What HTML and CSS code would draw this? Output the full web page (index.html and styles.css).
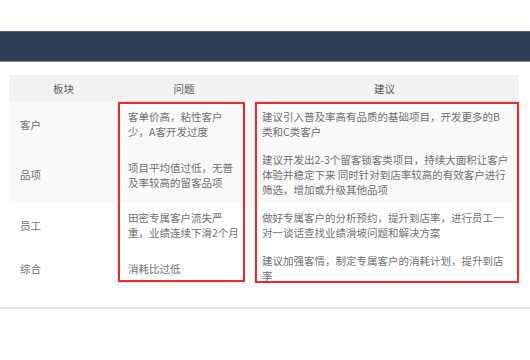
FILE: index.html
```html
<!DOCTYPE html>
<html lang="zh">
<head>
<meta charset="utf-8">
<link rel="stylesheet" href="styles.css">
</head>
<body>
<div class="topbar"></div>
<div class="content">
  <div class="table-wrap">
    <table class="report">
      <colgroup>
        <col class="c-block">
        <col class="c-issue">
        <col class="c-advice">
      </colgroup>
      <thead>
        <tr><th>板块</th><th>问题</th><th>建议</th></tr>
      </thead>
      <tbody>
        <tr class="shade">
          <td>客户</td>
          <td class="issue">客单价高，粘性客户<br>少，A客开发过度</td>
          <td class="advice">建议引入普及率高有品质的基础项目，开发更多的B<br>类和C类客户</td>
        </tr>
        <tr class="shade">
          <td>品项</td>
          <td class="issue">项目平均值过低，无普<br>及率较高的留客品项</td>
          <td class="advice">建议开发出2-3个留客锁客类项目，持续大面积让客户<br>体验并稳定下来 同时针对到店率较高的有效客户进行<br>筛选，增加或升级其他品项</td>
        </tr>
        <tr>
          <td>员工</td>
          <td class="issue">田密专属客户流失严<br>重，业绩连续下滑2个月</td>
          <td class="advice">做好专属客户的分析预约，提升到店率，进行员工一<br>对一谈话查找业绩滑坡问题和解决方案</td>
        </tr>
        <tr>
          <td>综合</td>
          <td class="issue">消耗比过低</td>
          <td class="advice">建议加强客情，制定专属客户的消耗计划，提升到店<br>率</td>
        </tr>
      </tbody>
    </table>
    <div class="mark mark-issue"></div>
    <div class="mark mark-advice"></div>
  </div>
</div>
<div class="divider"></div>
</body>
</html>
```
FILE: styles.css
```css
html, body {
  margin: 0;
  padding: 0;
  background: #ffffff;
}
body {
  font-family: "Noto Sans CJK SC", "Liberation Sans", sans-serif;
  font-size: 10.5px;
  color: #707070;
}
.topbar {
  margin-top: 31px;
  height: 29px;
  background: #2f3f57;
  border-top: 1px solid #55657a;
  border-bottom: 1px solid #7a8a9c;
}
.content {
  padding: 13px 11px 0 9px;
}
.table-wrap {
  position: relative;
}
.report {
  width: 510px;
  border-collapse: collapse;
  table-layout: fixed;
}
.c-block { width: 109px; }
.c-issue { width: 132px; }
.c-advice { width: 269px; }
.report th {
  background: #f2f2f2;
  height: 27px;
  padding: 0;
  font-weight: normal;
  color: #5c5c5c;
  text-align: center;
  line-height: 27px;
}
.report td {
  padding: 7px 11px 6px 11px;
  line-height: 15px;
  vertical-align: middle;
  text-align: left;
}
.report td.issue { padding-left: 10px; white-space: nowrap; }
.report td.advice { padding-left: 12px; white-space: nowrap; }
.report tr.shade td { background: #f9f9f9; }
.mark {
  position: absolute;
  top: 27px;
  border: 2px solid #ea2a2e;
  box-shadow: 0 0 1px rgba(240, 80, 80, 0.6);
  box-sizing: border-box;
}
.mark-issue {
  left: 109px;
  width: 127px;
  height: 180px;
}
.mark-advice {
  left: 246px;
  width: 264px;
  height: 181px;
}
.divider {
  margin-top: 18px;
  height: 2px;
  background: #e6e6e6;
}
```
